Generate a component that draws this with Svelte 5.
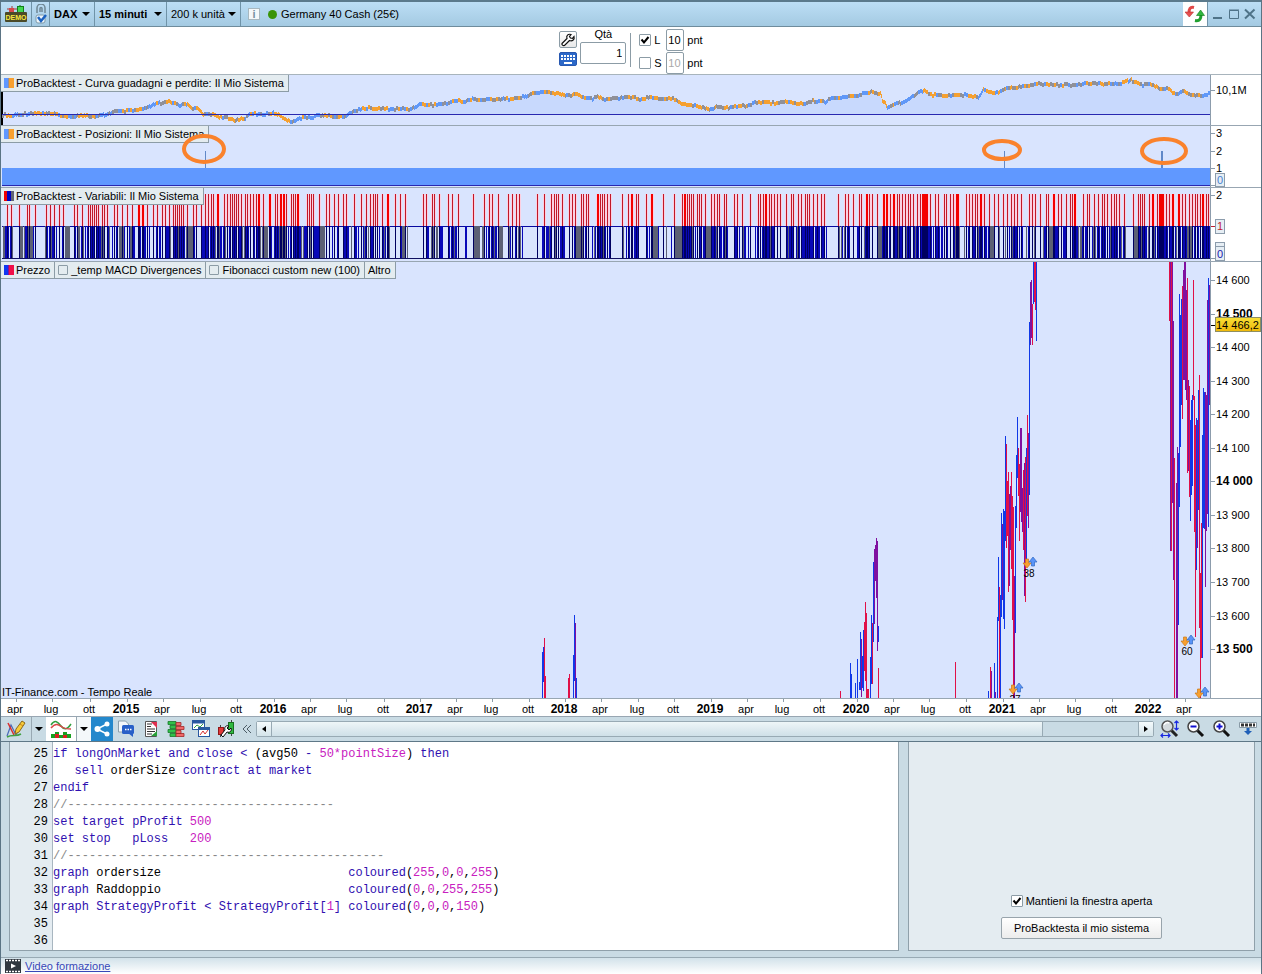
<script>
  const PLOT_LEFT = 1;
  const PLOT_WIDTH = 1209;
  const pct = (x) => `${((x - PLOT_LEFT) / PLOT_WIDTH) * 100}%`;

  // small stable noise, so the bars look the same on every load
  const noise = (n) => {
    const v = Math.sin(n * 12.9898) * 43758.5453;
    return v - Math.floor(v);
  };

  const bar = (x, top, bottom) => `M${x} ${top}h1V${bottom}h-1z`;

  // --- equity curve ---
  const curve = [
    [2, 115], [10, 116], [22, 114], [40, 113], [50, 114], [60, 115], [67, 117], [80, 115], [95, 117], [108, 114],
    [112, 112], [130, 111], [145, 109], [155, 104], [168, 102], [180, 105], [187, 104], [192, 108], [198, 109],
    [204, 115], [212, 114], [220, 117], [235, 120], [245, 118], [250, 114], [265, 114], [275, 113], [282, 117],
    [290, 122], [300, 118], [312, 117], [318, 115], [330, 116], [342, 117], [350, 113], [362, 108], [380, 109],
    [410, 109], [420, 104], [433, 105], [448, 103], [458, 100], [463, 102], [472, 99], [480, 100], [500, 99],
    [520, 98], [530, 94], [544, 92], [555, 93], [565, 96], [575, 94], [583, 97], [592, 99], [598, 96], [602, 99],
    [615, 98], [630, 97], [640, 99], [650, 97], [663, 99], [672, 98], [678, 101], [683, 104], [695, 106], [705, 108],
    [709, 110], [715, 107], [728, 108], [740, 105], [747, 106], [755, 102], [770, 103], [785, 102], [803, 104],
    [813, 101], [825, 102], [832, 97], [840, 98], [858, 95], [873, 92], [880, 94], [882, 100], [887, 107], [893, 104],
    [901, 103], [910, 98], [923, 90], [932, 95], [950, 95], [965, 95], [978, 97], [983, 90], [995, 93], [1005, 89],
    [1023, 86], [1040, 84], [1055, 85], [1080, 85], [1092, 83], [1112, 84], [1120, 83], [1131, 80], [1140, 85],
    [1150, 84], [1160, 89], [1168, 89], [1175, 94], [1182, 91], [1190, 94], [1202, 96], [1210, 93]
  ];

  const equity = { up: '', down: '', flat: '' };
  for (let i = 0; i < curve.length - 1; i++) {
    const [x0, y0] = curve[i];
    const [x1, y1] = curve[i + 1];
    for (let x = x0; x < x1; x++) {
      const y = Math.round(y0 + ((y1 - y0) * (x - x0)) / (x1 - x0) + (noise(x >> 1) - 0.5) * 2);
      const slope = (y1 - y0) / (x1 - x0);
      const n = noise((x >> 1) + 500) - slope * 0.8;
      const key = n > 0.72 ? 'up' : n < 0.38 ? 'down' : 'flat';
      equity[key] += bar(x, y - 2, y + 2);
    }
  }
  const equityArea = 'M2 114L' + curve.map(([x, y]) => `${x} ${Math.min(y, 114)}`).join('L') + 'V114z';

  // --- variables ---
  const signals = [
    7, 11, 19, 27, 29, 35, 46, 50, 54, 59, 63, 74, 77, 82, 88, 90, 92, 94, 96, 98, 102, 104, 107, 114, 117, 122, 127,
    132, 138, 139, 142, 143, 147, 153, 157, 162, 165, 169, 173, 175, 177, 179, 181, 183, 187, 193, 196, 201, 205, 208,
    211, 213, 217, 218, 224, 227, 230, 232, 234, 236, 238, 241, 245, 247, 250, 253, 256, 258, 259, 263, 269, 270, 275,
    277, 280, 281, 283, 284, 286, 291, 293, 295, 297, 298, 307, 309, 311, 313, 319, 326, 329, 334, 338, 343, 346, 354,
    361, 366, 370, 373, 375, 377, 382, 387, 388, 395, 400, 405, 423, 426, 432, 434, 439, 448, 452, 458, 473, 484, 489,
    492, 498, 508, 512, 516, 519, 537, 544, 551, 554, 556, 558, 562, 569, 572, 575, 581, 583, 586, 588, 597, 598, 600,
    602, 604, 607, 610, 622, 628, 631, 632, 636, 638, 646, 651, 652, 663, 674, 682, 684, 685, 687, 689, 691, 693, 697,
    699, 701, 705, 711, 714, 717, 719, 724, 726, 734, 737, 742, 750, 758, 760, 763, 765, 766, 769, 771, 774, 777, 780,
    786, 791, 793, 798, 801, 805, 807, 809, 813, 817, 821, 824, 838, 845, 848, 853, 859, 861, 866, 867, 869, 872, 877,
    883, 884, 886, 887, 890, 893, 894, 897, 899, 902, 905, 908, 910, 913, 917, 920, 922, 923, 924, 925, 926, 927, 930,
    935, 938, 944, 946, 950, 953, 956, 957, 958, 966, 969, 972, 975, 977, 980, 981, 984, 989, 994, 998, 1003, 1007,
    1011, 1014, 1017, 1021, 1029, 1032, 1035, 1040, 1046, 1048, 1053, 1054, 1058, 1061, 1066, 1070, 1072, 1074, 1075,
    1083, 1087, 1089, 1094, 1098, 1102, 1104, 1107, 1111, 1114, 1116, 1119, 1124, 1133, 1138, 1140, 1142, 1144, 1149,
    1152, 1153, 1157, 1159, 1160, 1161, 1162, 1163, 1166, 1169, 1172, 1173, 1178, 1179, 1182, 1185, 1189, 1192, 1195,
    1197, 1200, 1202, 1203, 1206, 1208
  ];
  const grayRuns = [
    [3, 4], [19, 22], [29, 32], [65, 69], [119, 123], [188, 192], [263, 267], [282, 286], [319, 324], [402, 405],
    [474, 479], [499, 502], [576, 580], [653, 657], [675, 681], [706, 710], [878, 881], [955, 959], [990, 993],
    [1049, 1052], [1080, 1081], [1134, 1137], [1187, 1191]
  ];
  const emptyRuns = [
    [13, 18], [36, 44], [70, 73], [328, 328], [390, 394], [412, 422], [460, 463], [468, 472], [505, 507], [525, 536],
    [612, 621], [640, 645], [659, 662], [730, 733], [827, 837], [1127, 1132]
  ];
  const within = (runs, x) => runs.some(([a, b]) => x >= a && x <= b);

  const signalSet = new Set(signals);
  const vars = { halo: '', red: '', hot: '', navy: '', blue: '', gray: '' };
  for (const x of signals) {
    const paired = signalSet.has(x - 1) || signalSet.has(x + 1);
    vars.halo += `M${x - 1} 194h3V226h-3z`;
    vars[paired ? 'hot' : 'red'] += bar(x, 194, 226);
  }
  for (let x = 3; x < 1210; x++) {
    const near = [-3, -2, -1, 1, 2, 3].filter((d) => signalSet.has(x + d)).length;
    const n = noise(x + 77);
    if (signalSet.has(x)) vars.navy += bar(x, 226, 259);
    else if (within(grayRuns, x)) vars.gray += bar(x, 226, 259);
    else if (within(emptyRuns, x)) continue;
    else if (n < 0.24 + near * 0.1) vars.blue += bar(x, 226, 259);
    else if (n > 0.88) vars.gray += bar(x, 226, 259);
  }

  // --- price bars: x, high, low, colour (b = up, r = down, p = mixed) ---
  const prices = [
    [542, 652, 698, 'b'], [543, 647, 682, 'b'], [544, 638, 698, 'r'], [545, 676, 698, 'r'],
    [568, 678, 698, 'r'], [569, 674, 698, 'r'], [573, 655, 698, 'b'], [574, 615, 681, 'b'], [575, 623, 698, 'p'],
    [576, 678, 698, 'b'],
    [840, 691, 698, 'r'], [850, 663, 698, 'b'], [851, 674, 698, 'b'], [855, 683, 698, 'b'], [857, 659, 698, 'b'],
    [859, 682, 690, 'b'], [860, 632, 690, 'b'], [861, 639, 697, 'p'], [862, 656, 688, 'b'], [863, 630, 691, 'b'],
    [864, 622, 671, 'r'], [865, 602, 681, 'r'], [866, 613, 698, 'r'], [867, 689, 698, 'r'], [868, 689, 698, 'r'],
    [870, 657, 698, 'b'], [871, 615, 684, 'b'], [872, 623, 684, 'r'], [873, 562, 642, 'b'], [874, 549, 624, 'p'],
    [875, 545, 581, 'p'], [876, 538, 598, 'p'], [877, 541, 651, 'p'], [878, 626, 642, 'b'], [878, 668, 698, 'r'],
    [955, 662, 698, 'r'],
    [988, 691, 698, 'b'], [990, 667, 698, 'r'], [991, 671, 698, 'p'], [994, 663, 698, 'b'], [995, 692, 698, 'p'],
    [997, 617, 698, 'b'], [998, 557, 621, 'b'], [999, 587, 698, 'r'], [1000, 595, 698, 'b'], [1001, 513, 617, 'b'],
    [1002, 524, 600, 'p'], [1003, 509, 619, 'b'], [1004, 511, 629, 'b'], [1005, 436, 541, 'b'], [1006, 444, 548, 'r'],
    [1007, 481, 536, 'r'], [1008, 472, 592, 'r'], [1009, 494, 586, 'p'], [1010, 486, 550, 'p'], [1011, 472, 569, 'r'],
    [1012, 496, 620, 'r'], [1013, 507, 698, 'r'], [1014, 576, 698, 'p'], [1015, 506, 633, 'b'], [1016, 455, 528, 'b'],
    [1017, 417, 478, 'b'], [1018, 448, 496, 'r'], [1019, 464, 541, 'r'], [1020, 428, 512, 'p'], [1021, 428, 522, 'p'],
    [1022, 488, 532, 'p'], [1023, 470, 550, 'r'], [1024, 463, 596, 'p'], [1025, 457, 602, 'r'], [1026, 448, 560, 'b'],
    [1027, 415, 516, 'r'], [1028, 433, 528, 'p'], [1029, 322, 495, 'b'], [1030, 282, 345, 'p'], [1031, 280, 338, 'p'],
    [1032, 304, 345, 'r'], [1033, 262, 304, 'b'], [1034, 262, 302, 'r'], [1035, 262, 310, 'r'], [1036, 262, 341, 'b'],
    [1169, 262, 321, 'r'], [1170, 262, 551, 'p'], [1171, 262, 551, 'r'], [1172, 262, 503, 'p'], [1173, 321, 580, 'p'],
    [1174, 458, 698, 'r'], [1176, 483, 698, 'p'], [1177, 447, 698, 'p'], [1178, 453, 625, 'b'], [1179, 294, 507, 'b'],
    [1180, 315, 447, 'b'], [1181, 299, 405, 'b'], [1182, 286, 419, 'r'], [1183, 270, 380, 'p'], [1184, 262, 380, 'p'],
    [1185, 262, 390, 'p'], [1186, 290, 400, 'p'], [1187, 278, 473, 'r'], [1188, 380, 471, 'p'], [1189, 386, 497, 'r'],
    [1190, 420, 521, 'b'], [1191, 400, 495, 'b'], [1192, 395, 486, 'b'], [1193, 280, 400, 'r'], [1194, 396, 532, 'r'],
    [1195, 425, 637, 'r'], [1196, 418, 570, 'b'], [1197, 420, 548, 'p'], [1198, 390, 510, 'b'], [1199, 375, 628, 'r'],
    [1200, 573, 698, 'r'], [1201, 523, 658, 'r'], [1202, 435, 658, 'b'], [1203, 388, 528, 'b'], [1204, 392, 529, 'b'],
    [1205, 392, 587, 'p'], [1206, 395, 531, 'p'], [1207, 300, 514, 'p'], [1208, 278, 527, 'b'], [1209, 285, 405, 'p']
  ];
  const pricePath = (kind) => prices.filter((p) => p[3] === kind).map(([x, t, b]) => bar(x, t, b)).join('');

  const priceLabels = Array.from({ length: 12 }, (_, i) => {
    const value = 14600 - i * 100;
    return {
      y: Math.round(280 + i * 33.55),
      text: `${Math.floor(value / 1000)} ${String(value % 1000).padStart(3, '0')}`,
      major: value % 500 === 0
    };
  });

  const timeLabels = [
    [15, 'apr'], [51, 'lug'], [89, 'ott'], [126, '2015'], [162, 'apr'], [199, 'lug'], [236, 'ott'], [273, '2016'],
    [309, 'apr'], [345, 'lug'], [383, 'ott'], [419, '2017'], [455, 'apr'], [491, 'lug'], [528, 'ott'], [564, '2018'],
    [600, 'apr'], [637, 'lug'], [673, 'ott'], [710, '2019'], [746, 'apr'], [782, 'lug'], [819, 'ott'], [856, '2020'],
    [892, 'apr'], [928, 'lug'], [965, 'ott'], [1002, '2021'], [1038, 'apr'], [1074, 'lug'], [1111, 'ott'],
    [1148, '2022'], [1184, 'apr']
  ];

  const markers = [
    { x: 1027, y: 563, label: '38' },
    { x: 1013, y: 689, label: '27' },
    { x: 1185, y: 641, label: '60' },
    { x: 1199, y: 693, label: '' }
  ];

  const circles = [
    { x: 204, y: 149, rx: 20, ry: 13 },
    { x: 1002, y: 150, rx: 18, ry: 9 },
    { x: 1164, y: 151, rx: 22, ry: 12 }
  ];

  // --- code editor, tokens are [kind, text] ---
  const gap = ' '.repeat(26);
  const rgba = (...values) => [
    ['k', 'coloured'],
    ['', '('],
    ...values.flatMap((v, i) => (i ? [['', ','], ['n', v]] : [['n', v]])),
    ['', ')']
  ];
  const code = [
    [['k', 'if longOnMarket and close < '], ['', '(avg50 '], ['k', '- '], ['n', '50*pointSize'], ['', ') '], ['k', 'then']],
    [['k', '   sell '], ['', 'orderSize '], ['k', 'contract at market']],
    [['k', 'endif']],
    [['c', '//' + '-'.repeat(37)]],
    [['k', 'set target pProfit '], ['n', '500']],
    [['k', 'set stop   pLoss   '], ['n', '200']],
    [['c', '//' + '-'.repeat(44)]],
    [['k', 'graph '], ['', 'ordersize' + gap], ...rgba('255', '0', '0', '255')],
    [['k', 'graph '], ['', 'Raddoppio' + gap], ...rgba('0', '0', '255', '255')],
    [['k', 'graph StrategyProfit < StrategyProfit['], ['n', '1'], ['k', '] '], ...rgba('0', '0', '0', '150')],
    [],
    []
  ];

  let quantity = $state('1');
  let longOn = $state(true);
  let shortOn = $state(false);
  let longPoints = $state('10');
  let shortPoints = $state('10');
  let showMacd = $state(false);
  let showFibonacci = $state(false);
  let keepOpen = $state(true);
</script>

<div class="window">
  <header class="titlebar">
    <button class="cell demo" aria-label="Demo">
      <svg width="24" height="18" viewBox="0 0 24 18">
        <path d="M8 1v5M3 4h10" stroke="#a03838" />
        <rect x="5" y="3" width="5" height="4" fill="#d84848" />
        <path d="M16 0v7" stroke="#107010" />
        <rect x="13.500" y="1.500" width="6" height="6" fill="#40d850" stroke="#108018" />
        <rect x="1" y="7" width="22" height="10" rx="1" fill="#4a4a28" />
        <text x="12" y="15" class="demo-text" text-anchor="middle">DEMO</text>
      </svg>
    </button>
    <button class="cell link" aria-label="Link">
      <svg width="14" height="20" viewBox="0 0 14 20">
        <path d="M3 9V4a4 4 0 0 1 8 0v5M6 8V4.500a1 1 0 0 1 2 0V8" fill="none" stroke="#6f8794" stroke-width="1.500" />
        <rect x="2" y="11" width="9" height="8" rx="2" fill="#eef6fb" stroke="#7f9aa8" />
        <path d="M4 13l3 4 5-6" fill="none" stroke="#1c62c0" stroke-width="2.500" />
      </svg>
    </button>
    <button class="cell pick dax"><b>DAX</b><i class="caret"></i></button>
    <button class="cell pick frame"><b>15 minuti</b><i class="caret"></i></button>
    <button class="cell pick units">200 k unità<i class="caret"></i></button>
    <div class="instrument">
      <button class="info" aria-label="Info">i</button>
      <span class="status"></span>
      <span>Germany 40 Cash (25€)</span>
    </div>
    <button class="refresh" aria-label="Aggiorna">
      <svg width="20" height="18" viewBox="0 0 20 18">
        <path d="M9 2.500C5 1.500 4 4 4 8" fill="none" stroke="#e04848" stroke-width="3" />
        <path d="M0 7h8.500L4.300 12z" fill="#e85050" stroke="#b83030" stroke-width=".6" />
        <path d="M10 15.500c5 1 6-2 6-6" fill="none" stroke="#20a030" stroke-width="3" />
        <path d="M11.500 10.500h8L15.600 5z" fill="#30b840" stroke="#107818" stroke-width=".6" />
      </svg>
    </button>
    <div class="window-buttons">
      <button aria-label="Riduci"><svg width="12" height="12" viewBox="0 0 12 12"><path d="M1 10h9" stroke="#4f7388" stroke-width="2" /></svg></button>
      <button aria-label="Ingrandisci"><svg width="12" height="12" viewBox="0 0 12 12"><path d="M1.500 2.500h9v8h-9zM1 2h10" fill="none" stroke="#4f7388" /></svg></button>
      <button aria-label="Chiudi"><svg width="12" height="12" viewBox="0 0 12 12"><path d="M1 1.500l9.500 9M10.500 1.500L1 10.500" stroke="#4f7388" stroke-width="2" /></svg></button>
    </div>
  </header>

  <form class="order">
    <div class="order-tools">
      <button type="button" class="tool" aria-label="Impostazioni">
        <svg width="16" height="15" viewBox="0 0 16 15">
          <path d="M2 11.500l5-5C6 4 8 1.500 11 2.500L9.500 4.500l1 1.500 2 .3L14 4.500c.8 3-1.500 5-4.500 4l-5 5c-1.500.5-3-.8-2.500-2z" fill="#fff" stroke="#111" stroke-width="1.200" />
        </svg>
      </button>
      <button type="button" class="tool keys" aria-label="Tastiera">
        <svg width="16" height="12" viewBox="0 0 16 12" shape-rendering="crispEdges">
          <path d="M1 3h14M1 6h14" stroke="#fff" stroke-width="2" stroke-dasharray="2 1" />
          <path d="M4 9.500h8" stroke="#fff" stroke-width="2" />
        </svg>
      </button>
    </div>
    <div class="quantity">
      <label for="qty">Qtà</label>
      <input id="qty" type="text" bind:value={quantity} />
    </div>
    <div class="stops">
      <div class="stop">
        <input id="long" type="checkbox" bind:checked={longOn} />
        <label for="long">L</label>
        <input type="text" aria-label="Punti long" bind:value={longPoints} />
        <span>pnt</span>
      </div>
      <div class="stop">
        <input id="short" type="checkbox" bind:checked={shortOn} />
        <label for="short">S</label>
        <input type="text" aria-label="Punti short" disabled={!shortOn} bind:value={shortPoints} />
        <span>pnt</span>
      </div>
    </div>
  </form>

  <!-- Equity curve -->
  <section class="row equity">
    <div class="plot">
      <svg class="fill" viewBox="1 75 1209 50" preserveAspectRatio="none" shape-rendering="crispEdges">
        <path d={equityArea} fill="#c8d9fd" />
        <rect x="1" y="92" width="2" height="33" fill="#000" />
        <path d={equity.flat} fill="#909098" />
        <path d={equity.down} fill="#f5a030" />
        <path d={equity.up} fill="#6098f8" />
        <rect x="2" y="114" width="1208" height="1" fill="#2828b0" />
      </svg>
      <div class="legend"><span><i class="swatch blue-orange"></i>ProBacktest - Curva guadagni e perdite: Il Mio Sistema</span></div>
    </div>
    <svg class="axis" height="50">
      <path d="M0 15.500h4" />
      <text x="5" y="19">10,1M</text>
    </svg>
  </section>

  <!-- Positions -->
  <section class="row positions">
    <div class="plot">
      <svg class="fill" viewBox="1 126 1209 61" preserveAspectRatio="none" shape-rendering="crispEdges">
        <rect x="2" y="168" width="1208" height="17" fill="#6098ff" />
        <rect x="2" y="185" width="1208" height="1" fill="#2828b0" />
        <path d="M205 151h1v17h-1zM1004 151h1v17h-1zM1161 151h2v17h-2z" fill="#6088c8" />
      </svg>
      <div class="legend"><span><i class="swatch blue-orange"></i>ProBacktest - Posizioni: Il Mio Sistema</span></div>
      <svg class="over">
        {#each circles as c}
          <ellipse cx={pct(c.x)} cy={c.y - 126} rx={c.rx} ry={c.ry} />
        {/each}
      </svg>
    </div>
    <svg class="axis" height="61">
      <path d="M0 7.500h4M0 25.500h4M0 42.500h4M0 59.500h4" />
      <text x="5" y="11">3</text>
      <text x="5" y="29">2</text>
      <text x="5" y="46">1</text>
      <rect class="tag" x="4.500" y="47.500" width="9" height="13" />
      <text x="6" y="58" class="light">0</text>
    </svg>
  </section>

  <!-- Variables -->
  <section class="row variables">
    <div class="plot">
      <svg class="fill" viewBox="1 188 1209 73" preserveAspectRatio="none" shape-rendering="crispEdges">
        <path d={vars.halo} fill="#fbd0e2" />
        <path d={vars.red} fill="#c01828" />
        <path d={vars.hot} fill="#f40000" />
        <rect x="2" y="226" width="1208" height="1" fill="#0808a0" />
        <path d={vars.gray} fill="#5c6074" />
        <path d={vars.blue} fill="#0808b8" />
        <path d={vars.navy} fill="#000060" />
        <rect x="2" y="258" width="1208" height="1" fill="#101060" />
      </svg>
      <div class="legend"><span><i class="swatch red-blue-gray"></i>ProBacktest - Variabili: Il Mio Sistema</span></div>
    </div>
    <svg class="axis" height="73">
      <path d="M0 7.500h4" />
      <text x="5" y="11">2</text>
      <path d="M0 38.500h4" class="red" />
      <rect class="tag" x="4.500" y="31.500" width="9" height="14" />
      <text x="6" y="42" class="red">1</text>
      <path d="M0 70.500h4" />
      <rect class="tag" x="4.500" y="54.500" width="9" height="4" />
      <rect class="tag" x="4.500" y="58.500" width="9" height="14" />
      <text x="6" y="70" class="blue">0</text>
    </svg>
  </section>

  <!-- Price -->
  <section class="row price">
    <div class="plot">
      <svg class="fill" viewBox="1 262 1209 436" preserveAspectRatio="none" shape-rendering="crispEdges">
        <path d={pricePath('b')} fill="#1038e8" />
        <path d={pricePath('r')} fill="#e01048" />
        <path d={pricePath('p')} fill="#8010a0" />
      </svg>
      <div class="legend">
        <span><i class="swatch blue-red"></i>Prezzo</span>
        <label><input type="checkbox" bind:checked={showMacd} />_temp MACD Divergences</label>
        <label><input type="checkbox" bind:checked={showFibonacci} />Fibonacci custom new (100)</label>
        <button>Altro</button>
      </div>
      <svg class="over">
        {#each markers as m}
          <svg x={pct(m.x)} y={m.y - 262} overflow="visible">
            <path d="M-1.500-4h3v4H4L0 5-4 0h2.500z" fill="#f8a030" stroke="#c87818" stroke-width=".7" />
            <path d="M4.500 3h3v-4H10L6-6 2-1h2.500z" fill="#5a94f8" stroke="#3068c0" stroke-width=".7" />
            <text x="2" y="14" text-anchor="middle">{m.label}</text>
          </svg>
        {/each}
      </svg>
      <span class="source">IT-Finance.com - Tempo Reale</span>
    </div>
    <svg class="axis" height="436">
      <defs>
        <linearGradient id="gold" x1="0" y1="0" x2="0" y2="1">
          <stop offset="0" stop-color="#f8e038" />
          <stop offset="1" stop-color="#f0b808" />
        </linearGradient>
      </defs>
      {#each priceLabels as label}
        <path d="M0 {label.y - 261.5}h4" />
        <text x="5" y={label.y - 258} class:major={label.major}>{label.text}</text>
      {/each}
      <path d="M0 63.500h4" class="black" />
      <rect x="4.500" y="55.500" width="45" height="14" fill="url(#gold)" stroke="#8f8f60" />
      <text x="5" y="67">14 466,2</text>
    </svg>
  </section>

  <div class="time">
    <svg>
      {#each timeLabels as [x, text]}
        <svg x={pct(x)} overflow="visible">
          <path d="M1.500 0v3" stroke="#8c9ca8" />
          <text y="14" text-anchor="middle" class:major={text.length === 4}>{text}</text>
        </svg>
      {/each}
    </svg>
  </div>

  <nav class="tools">
    <button class="draw" aria-label="Disegna">
      <svg width="20" height="20" viewBox="0 0 20 20">
        <path d="M1 17l4-11 5 10 3-6" fill="none" stroke="#4868b8" stroke-width="1.200" />
        <path d="M2 4l6 12" stroke="#d83030" stroke-width="1.500" />
        <path d="M1 18c5-3 9 0 14-3" fill="none" stroke="#40a040" stroke-width="1.500" />
        <path d="M9 15l1-5 6-8 3 2-6 9z" fill="#f8cc38" stroke="#8a6818" />
        <path d="M14 5l3 2" stroke="#c88820" />
      </svg>
    </button>
    <button class="arrow" aria-label="Menu disegno"><i class="caret"></i></button>
    <button class="indicator" aria-label="Indicatori">
      <svg width="22" height="20" viewBox="0 0 22 20">
        <path d="M1 6c4-6 7-3 10 1s6 4 10-2" fill="none" stroke="#30a040" stroke-width="1.500" />
        <path d="M1 9c5-6 8-3 11-1s5 2 9 2" fill="none" stroke="#d84848" stroke-width="1.500" />
        <path d="M1 19v-4h4v-2h4v3h4v-3h4v2h4v4z" fill="#18a020" />
        <path d="M5 15h4v4H5zM13 16h4v3h-4z" fill="#d82020" />
      </svg>
    </button>
    <button class="arrow white" aria-label="Menu indicatori"><i class="caret"></i></button>
    <button class="share" aria-label="Condividi">
      <svg width="16" height="16" viewBox="0 0 16 16" fill="#fff">
        <path d="M13 3L3 8l10 5" fill="none" stroke="#fff" stroke-width="1.500" />
        <circle cx="13" cy="3" r="2.500" /><circle cx="3.500" cy="8" r="3" /><circle cx="13" cy="13" r="2.500" />
      </svg>
    </button>
    <button class="icon" aria-label="Chat">
      <svg width="18" height="18" viewBox="0 0 18 18">
        <path d="M1.500 1h7l3 3v8h-10z" fill="#f4f8fb" stroke="#8ca0ac" />
        <rect x="5" y="5" width="12" height="9" rx="1.500" fill="#2860c8" />
        <path d="M11 13h5v4z" fill="#2860c8" />
        <path d="M8 9.500h6.500" stroke="#fff" stroke-width="1.500" stroke-dasharray="1.500 1" />
      </svg>
    </button>
    <button class="icon" aria-label="Notizie">
      <svg width="16" height="18" viewBox="0 0 16 18">
        <path d="M2.500 1.500h11v15h-11z" fill="#fff" stroke="#555" />
        <path d="M4 4h5M4 6.500h4M4 9h8M4 11.500h8M4 14h5" stroke="#333" stroke-width="1.200" />
        <path d="M8 2h6v6z" fill="#e03050" /><path d="M8 16h6v-5z" fill="#28a038" />
      </svg>
    </button>
    <button class="icon" aria-label="Book">
      <svg width="18" height="18" viewBox="0 0 18 18" stroke-width=".8">
        <path d="M1 1.500h8v3H1zM3 5.500h6v3H3zM1 9.500h8v3H1zM3 13.500h6v3H3z" fill="#30c048" stroke="#187828" />
        <path d="M9 2.500h5v3H9zM9 6.500h8v3H9zM9 10.500h5v3H9zM9 13.500h8v3H9z" fill="#f06868" stroke="#a02828" />
      </svg>
    </button>
    <button class="icon" aria-label="Finestre">
      <svg width="20" height="20" viewBox="0 0 20 20">
        <rect x="1.500" y="1.500" width="12" height="9" fill="#fff" stroke="#2858a0" />
        <path d="M1 3h13" stroke="#2858a0" stroke-width="3" />
        <path d="M3 9l3-3 3 2 3-3" fill="none" stroke="#30a040" />
        <rect x="7.500" y="8.500" width="11" height="9" fill="#fff" stroke="#2858a0" />
        <path d="M7 9.500h12" stroke="#2858a0" stroke-width="3" />
        <path d="M9 16l3-4 2 3 3-4" fill="none" stroke="#d83030" />
      </svg>
    </button>
    <button class="icon" aria-label="Configura">
      <svg width="18" height="20" viewBox="0 0 18 20">
        <path d="M3.500 6v12M14.500 1v16" stroke="#444" />
        <rect x="1.500" y="8.500" width="5" height="7" fill="#e03838" stroke="#901818" />
        <rect x="11.500" y="3.500" width="5" height="11" fill="#30b840" stroke="#187020" />
        <path d="M4 16l4-5c-1-3 1-5 4-4l-2 2 2 2 2-2c1 3-1 5-4 4l-4 5z" fill="#fff" stroke="#111" />
      </svg>
    </button>
    <button class="collapse" aria-label="Comprimi">
      <svg width="10" height="10" viewBox="0 0 10 10"><path d="M5 1L1 5l4 4M9 1L5 5l4 4" fill="none" stroke="#4c5c66" /></svg>
    </button>
    <div class="scroll">
      <button aria-label="Indietro"><i class="left"></i></button>
      <div class="track"><div class="thumb"></div></div>
      <button aria-label="Avanti"><i class="right"></i></button>
    </div>
    <button class="zoom" aria-label="Adatta">
      <svg width="20" height="20" viewBox="0 0 20 20">
        <path d="M11 11l6 6" stroke="#222" stroke-width="3" />
        <circle cx="7.500" cy="7.500" r="5.500" fill="#d4dade" stroke="#555" stroke-width="1.500" />
        <path d="M4 6c1-2 3-3 5-2" fill="none" stroke="#fff" stroke-width="1.500" />
        <path d="M1 16.500h9M3 14.500l-2 2 2 2M8 14.500l2 2-2 2M16.500 2v9M14.500 4l2-2 2 2M14.500 9l2 2 2-2" fill="none" stroke="#1828e0" stroke-width="1.200" />
      </svg>
    </button>
    <button class="zoom" aria-label="Riduci zoom">
      <svg width="20" height="20" viewBox="0 0 20 20">
        <path d="M11 11l6 6" stroke="#111" stroke-width="3" />
        <circle cx="7.500" cy="7.500" r="5.500" fill="#fff" stroke="#444" stroke-width="1.500" />
        <path d="M4.500 7.500h6" stroke="#1010d0" stroke-width="2" />
      </svg>
    </button>
    <button class="zoom" aria-label="Aumenta zoom">
      <svg width="20" height="20" viewBox="0 0 20 20">
        <path d="M11 11l6 6" stroke="#111" stroke-width="3" />
        <circle cx="7.500" cy="7.500" r="5.500" fill="#fff" stroke="#444" stroke-width="1.500" />
        <path d="M4.500 7.500h6M7.500 4.500v6" stroke="#1010d0" stroke-width="2" />
      </svg>
    </button>
    <button class="zoom" aria-label="Barra">
      <svg width="20" height="20" viewBox="0 0 20 20">
        <path d="M1.500 3.500h17v5h-17z" fill="#fff" stroke="#889aa6" />
        <path d="M3 6h14" stroke="#333" stroke-width="3" stroke-dasharray="3 1" />
        <path d="M8.500 9h3v3H14l-4 4-4-4h2.500z" fill="#2060b8" />
      </svg>
    </button>
  </nav>

  <main class="workspace">
    <ol class="editor" start="25">
      {#each code as line, i}
        <li><span class="num">{i + 25}</span><code>{#each line as [kind, text]}<span class={kind}>{text}</span>{/each}</code></li>
      {/each}
    </ol>
    <aside class="panel">
      <label><input type="checkbox" bind:checked={keepOpen} />Mantieni la finestra aperta</label>
      <button>ProBacktesta il mio sistema</button>
    </aside>
  </main>

  <footer>
    <svg width="16" height="14" viewBox="0 0 16 14">
      <rect width="16" height="14" fill="#303840" />
      <path d="M1 1.500h15M1 12.500h15" stroke="#fff" stroke-width="1.500" stroke-dasharray="2 1" />
      <path d="M6 4.500l5 2.500-5 2.500z" fill="#fff" />
    </svg>
    <a href="#video">Video formazione</a>
  </footer>
</div>

<style>
  :global(body) {
    margin: 0;
    background: #fff;
  }

  .window {
    display: flex;
    flex-direction: column;
    box-sizing: border-box;
    border-left: 1px solid #5b7484;
    border-right: 1px solid #5b7484;
    font-family: "Liberation Sans", Arial, sans-serif;
    font-size: 11px;
    line-height: 14px;
    color: #000;
  }

  button {
    display: flex;
    align-items: center;
    justify-content: center;
    flex: none;
    margin: 0;
    padding: 0;
    border: 0;
    background: none;
    font: inherit;
    color: inherit;
  }

  input {
    box-sizing: border-box;
    margin: 0;
    font: inherit;
    color: inherit;
  }

  input[type='text'] {
    padding: 0 3px;
    border: 1px solid #8c9ca6;
    border-radius: 2px;
    background: #fff;
  }

  input[type='checkbox'] {
    flex: none;
    appearance: none;
    width: 12px;
    height: 12px;
    border: 1px solid #8c9ca6;
    border-radius: 1px;
    background: #fff;
  }

  input[type='checkbox']:checked {
    background: #fff url("data:image/svg+xml,%3Csvg xmlns='http://www.w3.org/2000/svg' viewBox='0 0 10 10'%3E%3Cpath d='M1.500 4.500L4 7.500 8.500 2' fill='none' stroke='%23000' stroke-width='2'/%3E%3C/svg%3E");
  }

  .caret {
    border: 4px solid transparent;
    border-top-color: #000;
    border-bottom: 0;
  }

  /* Title bar */
  .titlebar {
    display: flex;
    height: 24px;
    border-top: 2px solid #5b7a8c;
    border-bottom: 1px solid #6f8c9c;
    background: linear-gradient(#bcdef5, #a4cae2);
    font-size: 12px;
  }

  .cell {
    box-sizing: border-box;
    border-right: 1px solid #6f93a8;
  }

  .demo { width: 31px; }
  .link { width: 18px; }

  .demo-text {
    font-size: 7px;
    font-weight: 700;
    fill: #f8e840;
  }

  .pick {
    justify-content: space-between;
    padding: 0 4px;
  }

  .dax { width: 45px; }
  .frame { width: 72px; }
  .units { width: 74px; }
  .pick { font-size: 11px; }

  .instrument {
    display: flex;
    flex: 1;
    align-items: center;
    gap: 4px;
    padding-left: 7px;
    font-size: 11px;
  }

  .info {
    width: 12px;
    height: 12px;
    margin-right: 4px;
    border: 1px solid #a8b8c0;
    background: #f4f8fa;
    color: #7890a0;
    font-weight: 700;
  }

  .status {
    width: 9px;
    height: 9px;
    border-radius: 50%;
    background: #3a9408;
  }

  .refresh {
    width: 24px;
    background: #fff;
  }

  .window-buttons {
    display: flex;
    align-items: center;
    gap: 4px;
    padding: 0 5px 0 4px;
    border-left: 1px solid #6f93a8;
  }

  /* Order form */
  .order {
    display: flex;
    justify-content: center;
    height: 47px;
    border-bottom: 1px solid #a8b4bc;
    background: #fff;
  }

  .order-tools {
    display: flex;
    flex-direction: column;
    gap: 4px;
    padding: 4px 3px 0 0;
  }

  .tool {
    box-sizing: border-box;
    width: 18px;
    height: 17px;
    border: 1px solid #8c9ca6;
    border-radius: 2px;
    background: linear-gradient(#fff, #e8e8e8);
  }

  .keys {
    height: 14px;
    border-color: #2858b0;
    background: #2c68c8;
  }

  .quantity {
    display: flex;
    flex-direction: column;
    align-items: center;
    gap: 1px;
  }

  .quantity input {
    width: 46px;
    height: 22px;
    text-align: right;
  }

  .stops {
    margin-left: 4px;
    padding: 1px 0 0 9px;
    background: linear-gradient(#8c9ca6, #8c9ca6) 0 6px / 1px 34px no-repeat;
  }

  .stop {
    display: flex;
    align-items: center;
    gap: 3px;
    height: 23px;
  }

  .stop label { width: 9px; }

  .stop input[type='text'] {
    width: 18px;
    height: 22px;
    padding: 0 1px;
  }

  .stop input:disabled { color: #a8a8a8; }

  /* Chart rows */
  .row {
    display: flex;
    border-bottom: 1px solid #98a6b2;
  }

  .plot {
    position: relative;
    flex: 1;
    min-width: 0;
    overflow: hidden;
    border-right: 1px solid #8c9cac;
    background: #d9e4fe;
  }

  .equity .plot { height: 50px; }
  .positions .plot { height: 61px; }
  .variables .plot { height: 73px; }
  .price .plot { height: 436px; }

  .fill {
    display: block;
    width: 100%;
    height: 100%;
  }

  .over {
    position: absolute;
    inset: 0;
    width: 100%;
    height: 100%;
    font-size: 10px;
    pointer-events: none;
  }

  .over ellipse {
    fill: none;
    stroke: #fa822c;
    stroke-width: 4px;
  }

  .legend {
    position: absolute;
    top: 0;
    left: 0;
    display: flex;
  }

  .legend > * {
    display: flex;
    align-items: center;
    box-sizing: border-box;
    height: 17px;
    padding: 0 4px 0 3px;
    border-right: 1px solid #8c9ca6;
    border-bottom: 1px solid #8c9ca6;
    background: #e4ecf0;
    white-space: nowrap;
  }

  .legend input[type='checkbox'] {
    width: 10px;
    height: 10px;
    margin-right: 3px;
    background: #e4ecf0;
  }

  .swatch {
    width: 10px;
    height: 10px;
    margin-right: 2px;
  }

  .blue-orange { background: linear-gradient(90deg, #6098ff 40%, #9090a0 40% 50%, #f8a030 50%); }
  .red-blue-gray { background: linear-gradient(90deg, #f00000 30%, #0000c0 30% 70%, #606474 70%); }
  .blue-red { background: linear-gradient(90deg, #1038f0 40%, #8010a0 40% 50%, #f01048 50%); }

  .source {
    position: absolute;
    left: 1px;
    bottom: -1px;
  }

  .axis {
    flex: none;
    width: 50px;
    background: #fff;
  }

  .axis path {
    fill: none;
    stroke: #8c9cac;
  }

  .axis .tag {
    fill: #e6eef4;
    stroke: #8c9cac;
  }

  .axis path.red { stroke: #c02030; }
  .axis path.black { stroke: #000; }
  .axis text.red { fill: #c02030; }
  .axis text.blue { fill: #2020b0; }
  .axis text.light { fill: #4880d0; }

  .major {
    font-size: 12px;
    font-weight: 700;
  }

  .time {
    height: 17px;
    padding-right: 51px;
    border-bottom: 1px solid #98a6b2;
  }

  .time > svg {
    display: block;
    width: 100%;
    height: 17px;
    overflow: hidden;
  }

  /* Toolbar */
  .tools {
    display: flex;
    align-items: center;
    height: 24px;
    border-bottom: 1px solid #5f7887;
    background: #c9dbe4;
  }

  .tools button { height: 24px; }
  .draw { width: 30px; }

  .arrow {
    box-sizing: border-box;
    width: 15px;
    border-left: 1px solid #98a8b2;
  }

  .indicator {
    width: 30px;
    background: #fff;
  }

  .white { background: #f4f8fa; }

  .share {
    width: 22px;
    background: #2488cc;
  }

  .icon { width: 25px; }
  .collapse { width: 17px; }

  .scroll {
    display: flex;
    flex: 1;
    box-sizing: border-box;
    height: 16px;
    margin: 0 3px 0 1px;
    border: 1px solid #98aab4;
    border-radius: 2px;
  }

  .scroll button {
    width: 14px;
    height: 14px;
    background: linear-gradient(#f4fafc, #d4e4ea);
  }

  .track {
    flex: 1;
    border: solid #98aab4;
    border-width: 0 1px;
  }

  .thumb {
    box-sizing: border-box;
    width: 89%;
    height: 14px;
    border-right: 1px solid #98aab4;
    background: linear-gradient(#eef6f8, #cfe0e8);
  }

  .left, .right {
    border: 3px solid transparent;
    border-right: 4px solid #000;
    border-left: 0;
  }

  .right {
    border-right: 0;
    border-left: 4px solid #000;
  }

  .zoom { width: 26px; }

  /* Editor and launch panel */
  .workspace {
    display: flex;
    gap: 9px;
    padding: 0 6px 6px 8px;
    border-bottom: 1px solid #98aab4;
    background: #c9dbe4;
  }

  .editor {
    flex: 1;
    min-width: 0;
    margin: 0;
    padding: 4px 0 0;
    border: solid #8fa0aa;
    border-width: 0 1px 1px;
    background: linear-gradient(90deg, #e4ecf1 42px, #a8b6c0 42px 43px, #fff 43px);
    font-family: "Liberation Mono", "Courier New", monospace;
    font-size: 12px;
    line-height: 17px;
    list-style: none;
  }

  .editor li {
    display: flex;
    height: 17px;
  }

  .num {
    width: 38px;
    padding-right: 5px;
    text-align: right;
  }

  code {
    font: inherit;
    white-space: pre;
  }

  .k { color: #3010b0; }
  .n { color: #c820c0; }
  .c { color: #888; }

  .panel {
    display: flex;
    flex-direction: column;
    align-items: center;
    justify-content: flex-end;
    box-sizing: border-box;
    width: 347px;
    gap: 9px;
    padding-bottom: 11px;
    border: solid #8fa0aa;
    border-width: 0 1px 1px;
    background: #e4ecf1;
  }

  .panel label {
    display: flex;
    align-items: center;
    gap: 3px;
  }

  .panel button {
    box-sizing: border-box;
    height: 22px;
    padding: 0 12px;
    border: 1px solid #98a4ac;
    border-radius: 2px;
    background: linear-gradient(#fff, #ececec);
  }

  footer {
    display: flex;
    align-items: center;
    gap: 4px;
    height: 16px;
    padding-left: 4px;
    background: linear-gradient(#d2e2ea, #fff);
  }

  footer a { color: #3848b8; }
</style>
